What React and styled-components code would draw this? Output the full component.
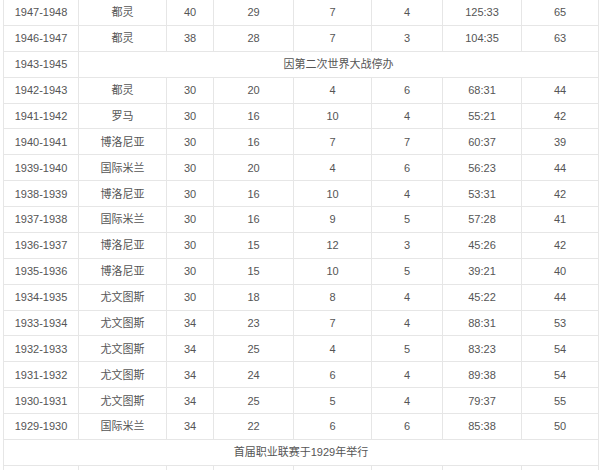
import React from "react";
import styled, { createGlobalStyle } from "styled-components";

const Global = createGlobalStyle`
  html, body { margin: 0; padding: 0; background: #fff; }
  body { font-family: "Liberation Sans", Arial, "Noto Sans CJK SC", sans-serif; }
`;

const Page = styled.div`
  width: 600px;
  height: 470px;
  overflow: hidden;
  padding-left: 3px;
  box-sizing: border-box;
`;

const Table = styled.table`
  border-collapse: collapse;
  table-layout: fixed;
  width: 595px;
  margin-top: -1px;
  font-size: 11px;
  color: #555;
`;

const Row = styled.tr`
  height: 25.88px;
`;

const Cell = styled.td`
  border: 1px solid #e6e6e6;
  padding: 0;
  text-align: center;
  vertical-align: middle;
  line-height: 14px;
  white-space: nowrap;
  font-family: "Liberation Sans", Arial, "Noto Sans CJK SC", sans-serif;
`;

const widths = [75, 88, 47, 80, 78, 71, 79, 77];

const rows = [
  ["1947-1948", "都灵", "40", "29", "7", "4", "125:33", "65"],
  ["1946-1947", "都灵", "38", "28", "7", "3", "104:35", "63"],
  ["1943-1945", "因第二次世界大战停办"],
  ["1942-1943", "都灵", "30", "20", "4", "6", "68:31", "44"],
  ["1941-1942", "罗马", "30", "16", "10", "4", "55:21", "42"],
  ["1940-1941", "博洛尼亚", "30", "16", "7", "7", "60:37", "39"],
  ["1939-1940", "国际米兰", "30", "20", "4", "6", "56:23", "44"],
  ["1938-1939", "博洛尼亚", "30", "16", "10", "4", "53:31", "42"],
  ["1937-1938", "国际米兰", "30", "16", "9", "5", "57:28", "41"],
  ["1936-1937", "博洛尼亚", "30", "15", "12", "3", "45:26", "42"],
  ["1935-1936", "博洛尼亚", "30", "15", "10", "5", "39:21", "40"],
  ["1934-1935", "尤文图斯", "30", "18", "8", "4", "45:22", "44"],
  ["1933-1934", "尤文图斯", "34", "23", "7", "4", "88:31", "53"],
  ["1932-1933", "尤文图斯", "34", "25", "4", "5", "83:23", "54"],
  ["1931-1932", "尤文图斯", "34", "24", "6", "4", "89:38", "54"],
  ["1930-1931", "尤文图斯", "34", "25", "5", "4", "79:37", "55"],
  ["1929-1930", "国际米兰", "34", "22", "6", "6", "85:38", "50"],
];

export default function App() {
  return (
    <Page>
      <Global />
      <Table>
        <colgroup>
          {widths.map((w, i) => (
            <col key={i} style={{ width: w }} />
          ))}
        </colgroup>
        <tbody>
          {rows.map((r, i) => (
            <Row key={i}>
              {r.length === 2 ? (
                <>
                  <Cell>{r[0]}</Cell>
                  <Cell colSpan={7}>{r[1]}</Cell>
                </>
              ) : (
                r.map((c, j) => <Cell key={j}>{c}</Cell>)
              )}
            </Row>
          ))}
          <Row>
            <Cell colSpan={8}>首届职业联赛于1929年举行</Cell>
          </Row>
          <Row>
            <Cell></Cell>
            <Cell></Cell>
            <Cell></Cell>
            <Cell></Cell>
            <Cell></Cell>
            <Cell></Cell>
            <Cell></Cell>
            <Cell></Cell>
          </Row>
        </tbody>
      </Table>
    </Page>
  );
}
